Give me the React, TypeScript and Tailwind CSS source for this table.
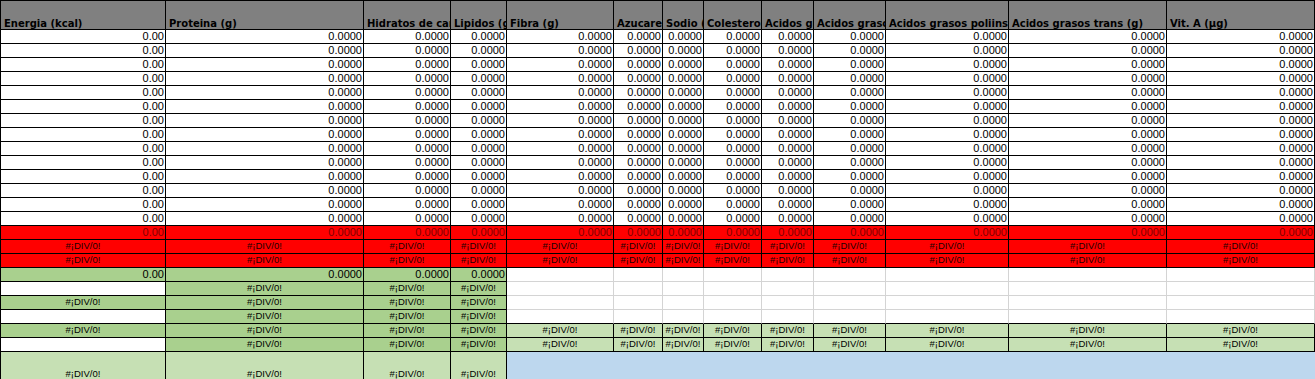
import React from "react";

type Kind =
  | "num"
  | "rednum"
  | "reddiv"
  | "gnum"
  | "gdiv"
  | "white"
  | "grid"
  | "gridb"
  | "lgdiv"
  | "lgdivb"
  | "blue";

const base = "overflow-hidden whitespace-nowrap font-['Liberation_Sans',Arial,sans-serif]";

const kindClass: Record<Kind, string> = {
  num: "h-[14px] bg-white border-r border-b border-black text-right pr-[1px] text-[11px] leading-[12px] text-black",
  rednum: "h-[14px] bg-[#ff0000] border-r border-b border-black text-right pr-[1px] text-[11px] leading-[12px] text-[#800000]",
  reddiv: "h-[14px] bg-[#ff0000] border-r border-b border-black text-center text-[9.5px] leading-[11px] text-[#1a0000]",
  gnum: "h-[14px] bg-[#a9d08e] border-r border-b border-black text-right pr-[1px] text-[11px] leading-[12px] text-black",
  gdiv: "h-[14px] bg-[#a9d08e] border-r border-b border-black text-center text-[9.5px] leading-[11px] text-black",
  white: "h-[14px] bg-white border-r border-b border-black",
  grid: "h-[14px] bg-white border-r border-b border-[#d4d4d4]",
  gridb: "h-[14px] bg-white border-r border-r-[#d4d4d4] border-b border-b-black",
  lgdiv: "h-[14px] bg-[#c6e0b4] border-r border-b border-black text-center text-[9.5px] leading-[11px] text-black",
  lgdivb: "h-[29px] bg-[#c6e0b4] border-r border-b border-black flex items-end justify-center text-[9.5px] leading-[11px] text-black pb-[1px]",
  blue: "h-[29px] bg-[#bdd7ee]",
};

const headers = [
  "Energia (kcal)",
  "Proteina (g)",
  "Hidratos de carbono (g)",
  "Lipidos (g)",
  "Fibra (g)",
  "Azucares (g)",
  "Sodio (mg)",
  "Colesterol (mg)",
  "Acidos grasos saturados (g)",
  "Acidos grasos monoinsaturados (g)",
  "Acidos grasos poliinsaturados (g)",
  "Acidos grasos trans (g)",
  "Vit. A (µg)",
];

type Cell = { k: Kind; t?: string };

const DIV = "#¡DIV/0!";
const N = 13;
const range = (n: number) => Array.from({ length: n }, (_, i) => i);

function buildRows(): Cell[][] {
  const rows: Cell[][] = [];
  for (let r = 0; r < 14; r++) {
    rows.push(range(N).map((c) => ({ k: "num", t: c === 0 ? "0.00" : "0.0000" })));
  }
  rows.push(range(N).map((c) => ({ k: "rednum", t: c === 0 ? "0.00" : "0.0000" })));
  rows.push(range(N).map(() => ({ k: "reddiv", t: DIV })));
  rows.push(range(N).map(() => ({ k: "reddiv", t: DIV })));
  rows.push(
    range(N).map((c) =>
      c < 4 ? { k: "gnum", t: c === 0 ? "0.00" : "0.0000" } : { k: "grid" }
    )
  );
  rows.push(range(N).map((c) => (c === 0 ? { k: "white" } : c < 4 ? { k: "gdiv", t: DIV } : { k: "grid" })));
  rows.push(range(N).map((c) => (c < 4 ? { k: "gdiv", t: DIV } : { k: "grid" })));
  rows.push(range(N).map((c) => (c === 0 ? { k: "white" } : c < 4 ? { k: "gdiv", t: DIV } : { k: "gridb" })));
  rows.push(range(N).map((c) => (c < 4 ? { k: "gdiv", t: DIV } : { k: "lgdiv", t: DIV })));
  rows.push(range(N).map((c) => (c === 0 ? { k: "white" } : c < 4 ? { k: "gdiv", t: DIV } : { k: "lgdiv", t: DIV })));
  rows.push(range(N).map((c) => (c < 4 ? { k: "lgdivb", t: DIV } : { k: "blue" })));
  return rows;
}

export default function App() {
  const rows = buildRows();
  return (
    <div className="w-[1315px] h-[379px] overflow-hidden bg-white">
      <div className="grid grid-cols-[165px_198px_87px_56px_107px_49px_41px_58px_52px_72px_123px_158px_148px] border-l border-t border-black w-[1315px]">
        {headers.map((h, i) => (
          <div
            key={"h" + i}
            className="h-[29px] bg-[#808080] border-r border-b border-black flex items-end pl-[3px] overflow-hidden whitespace-nowrap font-['DejaVu_Sans',sans-serif] font-bold text-[10px] leading-[10px] text-black"
          >
            {h}
          </div>
        ))}
        {rows.map((row, r) =>
          row.map((cell, c) => (
            <div key={r + "-" + c} className={base + " " + kindClass[cell.k]}>
              {cell.t ?? ""}
            </div>
          ))
        )}
      </div>
    </div>
  );
}
